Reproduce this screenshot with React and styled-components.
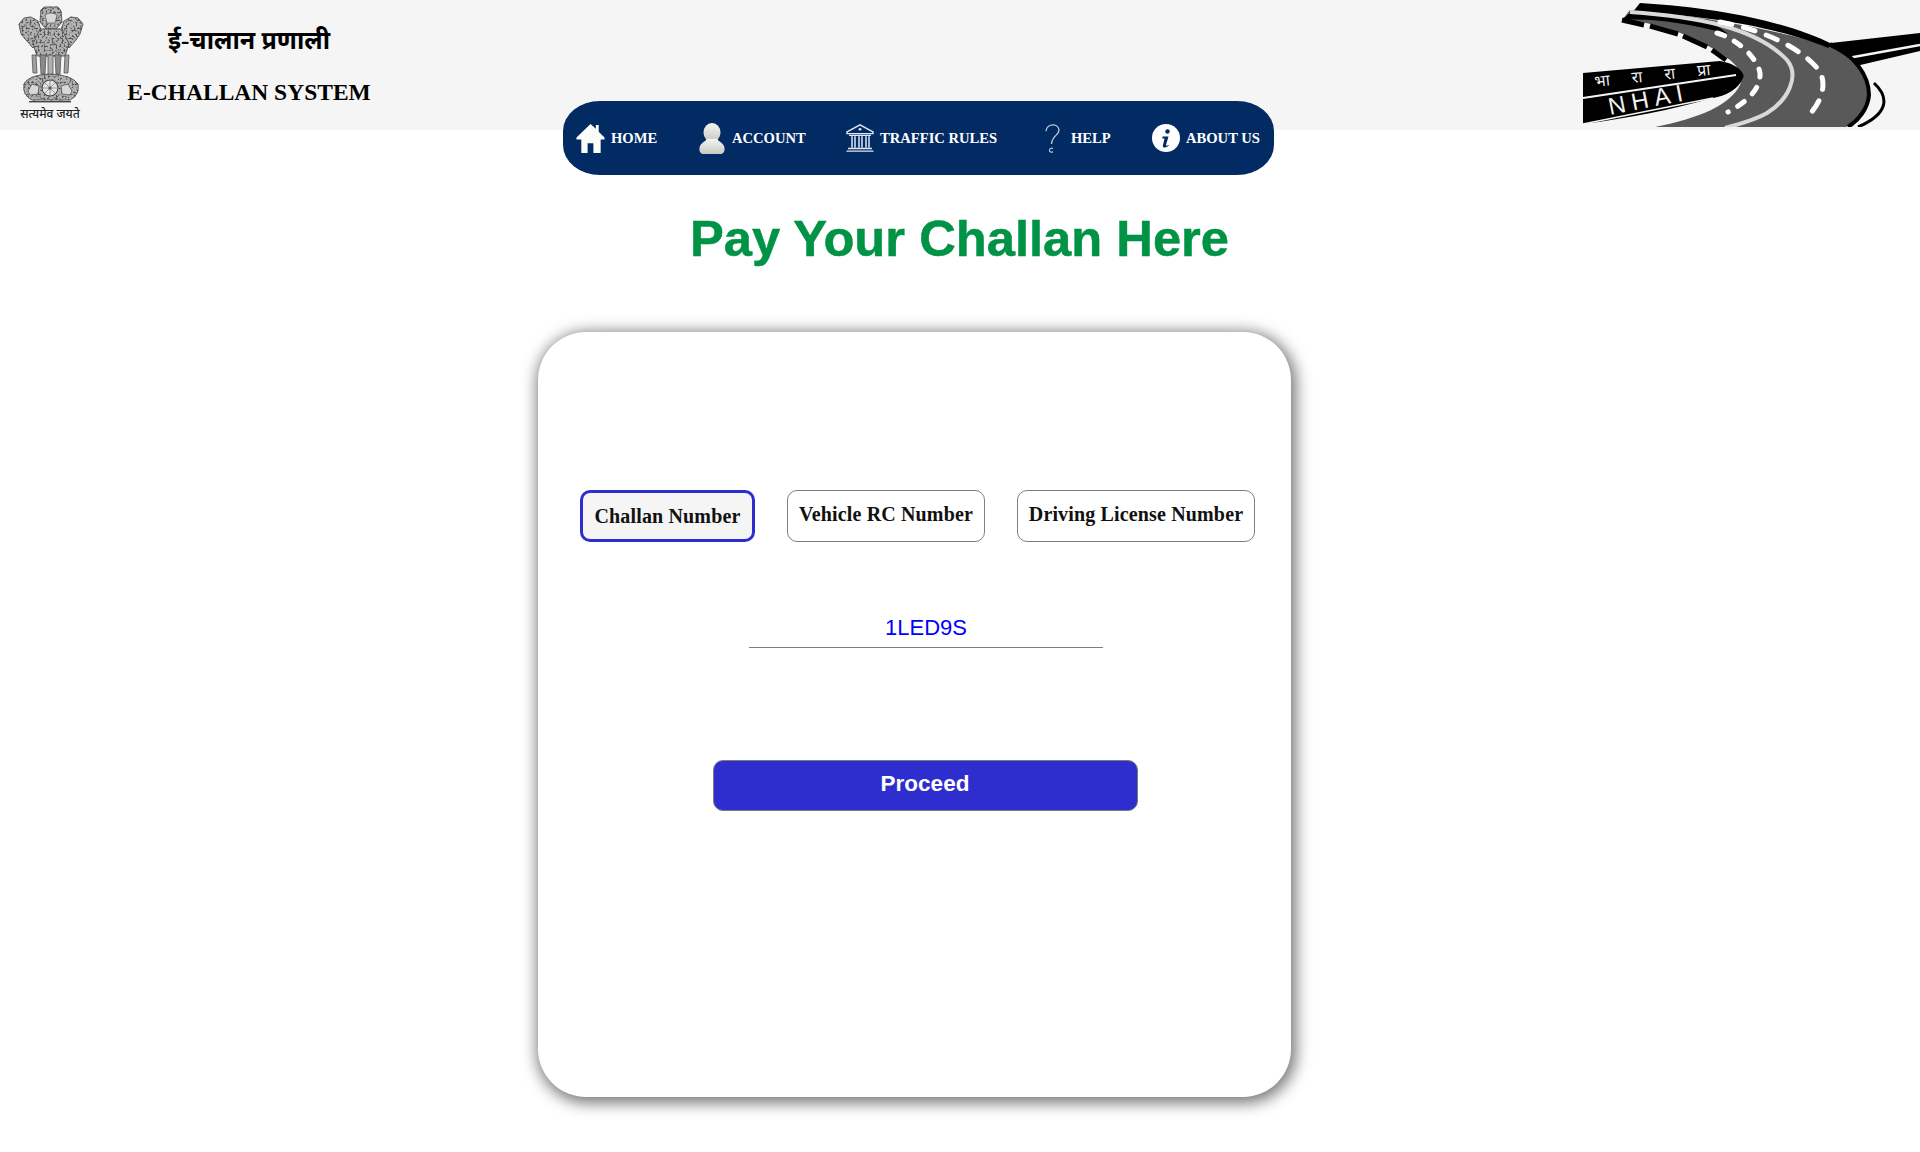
import styled, { createGlobalStyle } from "styled-components";

const GlobalStyle = createGlobalStyle`
  * { box-sizing: border-box; }
  html, body { margin: 0; background: #fff; }
  body { font-family: "Liberation Serif", "Noto Sans", serif; }
`;

function Emblem() {
  return (
    <EmblemSvg viewBox="0 0 100 130">
      <defs>
        <filter id="grit" x="-5%" y="-5%" width="110%" height="110%">
          <feTurbulence type="fractalNoise" baseFrequency="0.5" numOctaves="2" seed="4" />
          <feColorMatrix values="0 0 0 0 0.1  0 0 0 0 0.1  0 0 0 0 0.1  0 0 0 -7 3.7" />
          <feComposite in2="SourceGraphic" operator="in" result="specks" />
          <feMerge>
            <feMergeNode in="SourceGraphic" />
            <feMergeNode in="specks" />
          </feMerge>
        </filter>
      </defs>
      <g filter="url(#grit)" stroke="#444" strokeWidth="0.8" fill="#b4b4b4">
        <path d="M41 10 L44 7 L58 7 L61 11 L62 22 L56 29 L46 29 L40 22 Z" />
        <path d="M19 24 L24 18 L31 17 L38 21 L41 30 L38 42 L33 48 L26 40 L21 34 Z" />
        <path d="M83 24 L78 18 L71 17 L64 21 L61 30 L64 42 L69 48 L76 40 L80 34 Z" />
        <path d="M33 44 L40 29 L62 29 L69 44 L65 56 L37 56 Z" />
        <path d="M24 84 Q28 75 50 74 Q72 75 78 84 Q80 95 70 100 L32 100 Q22 95 24 84 Z" />
      </g>
      <path d="M45 15 Q51 11 57 15 L55 23 L47 23 Z" fill="#d8d8d8" stroke="#444" strokeWidth="0.6" />
      <g stroke="#555" strokeWidth="0.8">
        <path d="M33 73 L32 55 L36 55 L37 73 Z" fill="#a0a0a0" />
        <path d="M41 74 L40 55 L46 55 L45 74 Z" fill="#8a8a8a" />
        <path d="M48 74 L48 55 L53 55 L53 74 Z" fill="#b0b0b0" />
        <path d="M56 74 L55 55 L61 55 L60 74 Z" fill="#8a8a8a" />
        <path d="M64 73 L65 55 L69 55 L68 73 Z" fill="#a0a0a0" />
      </g>
      <rect x="29" y="101" width="42" height="1.4" fill="#444" />
      <circle cx="50" cy="88" r="8" fill="#e4e4e4" stroke="#444" strokeWidth="1.1" />
      <path d="M50 80 V96 M42 88 H58 M44.3 82.3 L55.7 93.7 M55.7 82.3 L44.3 93.7" stroke="#666" strokeWidth="0.6" />
      <circle cx="50" cy="88" r="1.6" fill="#555" />
      <path d="M28 91 L32 84 L39 86 L38 94 L30 95 Z" fill="#d8d8d8" stroke="#444" strokeWidth="0.7" />
      <path d="M72 91 L68 84 L61 86 L62 94 L70 95 Z" fill="#d8d8d8" stroke="#444" strokeWidth="0.7" />
      <EmblemMotto x="50" y="118" textAnchor="middle">सत्यमेव जयते</EmblemMotto>
    </EmblemSvg>
  );
}

function NhaiLogo() {
  return (
    <NhaiSvg viewBox="0 0 360 127">
      {/* branch road */}
      <path d="M262 44 L360 33 L360 51 L296 66 Z" fill="#000" />
      <path d="M288 58 L360 45" stroke="#f5f5f5" strokeWidth="2.5" fill="none" />
      {/* road body */}
      <path d="M70 10 C130 14 220 30 268 46 C298 60 312 80 308 95 C306 110 298 120 286 127 L95 127 C140 118 170 105 180 85 C186 70 170 58 150 47 C125 33 95 22 62 20 Z" fill="#595959" />
      <path d="M80 3 C165 8 232 24 272 44 L268 48 C225 30 150 14 72 13 Z" fill="#000" />
      <path d="M62 20 L72 11 L150 20 L168 34 C130 24 95 18 62 20 Z" fill="#000" />
      <path d="M270 44 C294 55 309 75 309 95 C308 108 299 120 288 127" stroke="#000" strokeWidth="4" fill="none" />
      <path d="M314 83 C330 98 328 114 298 127" stroke="#000" strokeWidth="3" fill="none" />
      {/* lane markings */}
      <path d="M70 12 C130 16 195 26 227 60 C240 76 228 100 207 113 C195 120 180 124 165 128" stroke="#d9d9d9" strokeWidth="4" fill="none" />
      <path d="M160 22 C205 30 245 50 260 72 C268 88 258 105 250 114" stroke="#fff" strokeWidth="5" strokeDasharray="12 12" strokeLinecap="round" fill="none" />
      <path d="M157 33 C180 40 198 60 200 73 C201 90 185 103 168 112" stroke="#fff" strokeWidth="5" strokeDasharray="8 11" strokeLinecap="round" fill="none" />
      {/* left edge */}
      <path d="M62 20 L84 25 M90 26 L118 34 M123 36 L147 47 M152 50 L166 60" stroke="#000" strokeWidth="5" fill="none" />
      {/* sign board */}
      <path d="M23 73 L160 61 C178 64 186 74 183 78 C178 90 165 96 153 98 C110 110 70 118 23 124 Z" fill="#000" />
      <path d="M23 98 L176 75" stroke="#f5f5f5" strokeWidth="2" fill="none" />
      <path d="M23 124 L153 98" stroke="#f5f5f5" strokeWidth="1.5" fill="none" />
      <NhaiHindi x="35" y="87" transform="rotate(-6 35 87)">भा रा रा प्रा</NhaiHindi>
      <NhaiMark x="50" y="115" transform="rotate(-11 50 115)">NHAI</NhaiMark>
    </NhaiSvg>
  );
}

const HomeIcon = () => (
  <IconSvg width="29" height="29" viewBox="0 8 29 30">
    <path d="M14.5 8 L20 13 V9 H23 V16 L29 22 V24 H25 V38 H17.5 V28 H11.5 V38 H5 V24 H0 V22 Z" fill="#fbfdf8" />
  </IconSvg>
);

const UserIcon = () => (
  <IconSvg width="26" height="31" viewBox="0 0 26 31">
    <defs>
      <linearGradient id="bust" x1="0" y1="0" x2="0" y2="1">
        <stop offset="0" stopColor="#f4f4f0" />
        <stop offset="1" stopColor="#c9c9c4" />
      </linearGradient>
    </defs>
    <ellipse cx="13" cy="9.5" rx="8.5" ry="9.5" fill="url(#bust)" />
    <path d="M8 16 C6 19 1 20 0.5 25 C0 29 2 31 5 31 H21 C24 31 26 29 25.5 25 C25 20 20 19 18 16 Z" fill="url(#bust)" />
  </IconSvg>
);

const BankIcon = () => (
  <IconSvg width="28" height="28" viewBox="0 0 28 32" preserveAspectRatio="none">
    <g stroke="#dfe6f1" fill="none" strokeWidth="1.5">
      <path d="M1 9 L14 1 L27 9 V11 H1 Z" />
      <path d="M3 13 H25 M2 28 H26 M0.5 31 H27.5" />
      <path d="M6 14 V27 M9 14 V27 M13 14 V27 M16 14 V27 M20 14 V27 M23 14 V27" />
    </g>
    <circle cx="14" cy="6" r="1.4" fill="#dfe6f1" />
  </IconSvg>
);

const HelpIcon = () => (
  <IconSvg width="16" height="29" viewBox="0 0 16 32" preserveAspectRatio="none">
    <path d="M2 8 C2 3 6 1 9 1 C13 1 15 4 15 7 C15 12 8 13 7.5 22" stroke="#c6ccd6" strokeWidth="1.3" fill="none" />
    <path d="M9 27 C7 26 5.5 27 5.5 29 C5.5 31 7 31.5 9 30.5" stroke="#c6ccd6" strokeWidth="1.2" fill="none" />
  </IconSvg>
);

const InfoIcon = () => (
  <IconSvg width="28" height="28" viewBox="0 0 28 28">
    <circle cx="14" cy="14" r="14" fill="#fff" />
    <circle cx="15.5" cy="7.5" r="2.2" fill="#032b63" />
    <path d="M10.5 12.5 H16.5 L14 21 C13.8 22 14.6 22.2 16.5 20.8 L16.8 21.6 C14.5 24 10.2 24.6 10.9 21.4 L12.5 14.4 H10.3 Z" fill="#032b63" />
  </IconSvg>
);

const links = [
  { label: "HOME", icon: <HomeIcon />, gap: 6, width: 123 },
  { label: "ACCOUNT", icon: <UserIcon />, gap: 7, width: 147 },
  { label: "TRAFFIC RULES", icon: <BankIcon />, gap: 6, width: 198 },
  { label: "HELP", icon: <HelpIcon />, gap: 11, width: 108 },
  { label: "ABOUT US", icon: <InfoIcon />, gap: 6, width: 108 },
];

function App() {
  return (
    <Page>
      <GlobalStyle />
      <Header>
        <Brand>
          <Emblem />
          <Titles>
            <HindiTitle>ई-चालान प्रणाली</HindiTitle>
            <EnglishTitle>E-CHALLAN SYSTEM</EnglishTitle>
          </Titles>
        </Brand>
        <NhaiLogo />
      </Header>
      <Nav>
        {links.map((link) => (
          <NavLink key={link.label} href="#" $gap={link.gap} $width={link.width}>
            {link.icon}
            {link.label}
          </NavLink>
        ))}
      </Nav>
      <Heading>Pay Your Challan Here</Heading>
      <Card>
        <Options>
          <Option $active $width={175}>Challan Number</Option>
          <Option $width={198}>Vehicle RC Number</Option>
          <Option $width={238}>Driving License Number</Option>
        </Options>
        <NumberInput defaultValue="1LED9S" />
        <Proceed>Proceed</Proceed>
      </Card>
    </Page>
  );
}

export default App;

const Page = styled.div`
  width: 1920px;
  min-height: 1152px;
  background: #fff;
  display: flex;
  flex-direction: column;
`;

const Header = styled.header`
  height: 130px;
  background: #f5f5f5;
  display: flex;
  justify-content: space-between;
`;

const Brand = styled.div`
  display: flex;
`;

const EmblemSvg = styled.svg`
  width: 100px;
  height: 130px;
`;

const EmblemMotto = styled.text`
  font-family: "Noto Sans", "Liberation Serif", serif;
  font-size: 12px;
  font-weight: 500;
  fill: #222;
`;

const NhaiSvg = styled.svg`
  width: 360px;
  height: 127px;
`;

const NhaiHindi = styled.text`
  font-family: "Noto Sans", serif;
  font-size: 16px;
  fill: #f0f0f0;
  letter-spacing: 9px;
`;

const NhaiMark = styled.text`
  font-family: "Liberation Sans", sans-serif;
  font-size: 24px;
  fill: #f0f0f0;
  letter-spacing: 6px;
`;

const Titles = styled.div`
  width: 246px;
  margin-left: 26px;
  display: flex;
  flex-direction: column;
  align-items: center;
`;

const HindiTitle = styled.div`
  margin-top: 21px;
  font-size: 25px;
  line-height: 40px;
  font-weight: 700;
  color: #000;
`;

const EnglishTitle = styled.div`
  margin-top: 17px;
  font-size: 23.5px;
  line-height: 28px;
  font-weight: 700;
  color: #000;
  white-space: nowrap;
`;

const Nav = styled.nav`
  width: 711px;
  height: 74px;
  margin: -29px 0 0 563px;
  padding-left: 13px;
  background: #032b63;
  border-radius: 37px / 30px;
  display: flex;
  align-items: center;
  position: relative;
`;

const NavLink = styled.a`
  width: ${(p) => p.$width}px;
  flex: none;
  display: flex;
  align-items: center;
  gap: ${(p) => p.$gap}px;
  color: #fff;
  font-size: 14.6px;
  font-weight: 700;
  text-decoration: none;
  white-space: nowrap;
`;

const IconSvg = styled.svg`
  flex: none;
  display: block;
`;

const Heading = styled.h1`
  margin: 35px 0 0 690px;
  font-family: "Liberation Sans", sans-serif;
  font-size: 50.7px;
  line-height: 58px;
  font-weight: 700;
  color: #009245;
  -webkit-text-stroke: 0.5px #009245;
`;

const Card = styled.section`
  width: 753px;
  height: 765px;
  margin: 64px 0 0 538px;
  padding-top: 158px;
  background: #fff;
  border-radius: 48px;
  box-shadow: 2px 3px 15px 3px #777;
  display: flex;
  flex-direction: column;
  align-items: center;
`;

const Options = styled.div`
  width: 100%;
  padding-left: 42px;
  display: flex;
  gap: 32px;
`;

const Option = styled.button`
  width: ${(p) => p.$width}px;
  height: 52px;
  flex: none;
  padding: 0 0 ${(p) => (p.$active ? "0" : "4px")};
  background: ${(p) => (p.$active ? "#f5f5f5" : "#fff")};
  border: ${(p) => (p.$active ? "3px solid #2e2ecf" : "1px solid #808080")};
  border-radius: 10px;
  font-family: "Liberation Serif", serif;
  font-size: 20px;
  letter-spacing: 0.15px;
  font-weight: 700;
  color: #111;
  white-space: nowrap;
`;

const NumberInput = styled.input`
  width: 354px;
  height: 43px;
  margin: 63px 0 0 23px;
  padding: 4px 0 0;
  border: 0;
  border-bottom: 1px solid #808080;
  outline: 0;
  background: transparent;
  font-family: "Liberation Sans", sans-serif;
  font-size: 22px;
  color: #0000ff;
  text-align: center;
`;

const Proceed = styled.button`
  width: 425px;
  height: 51px;
  margin: 112px 0 0 21px;
  padding: 0 0 4px;
  background: #2e2ecf;
  border: 1px solid #7a7a7a;
  border-radius: 10px;
  font-family: "Liberation Sans", sans-serif;
  font-size: 22.5px;
  font-weight: 700;
  color: #fff;
`;
